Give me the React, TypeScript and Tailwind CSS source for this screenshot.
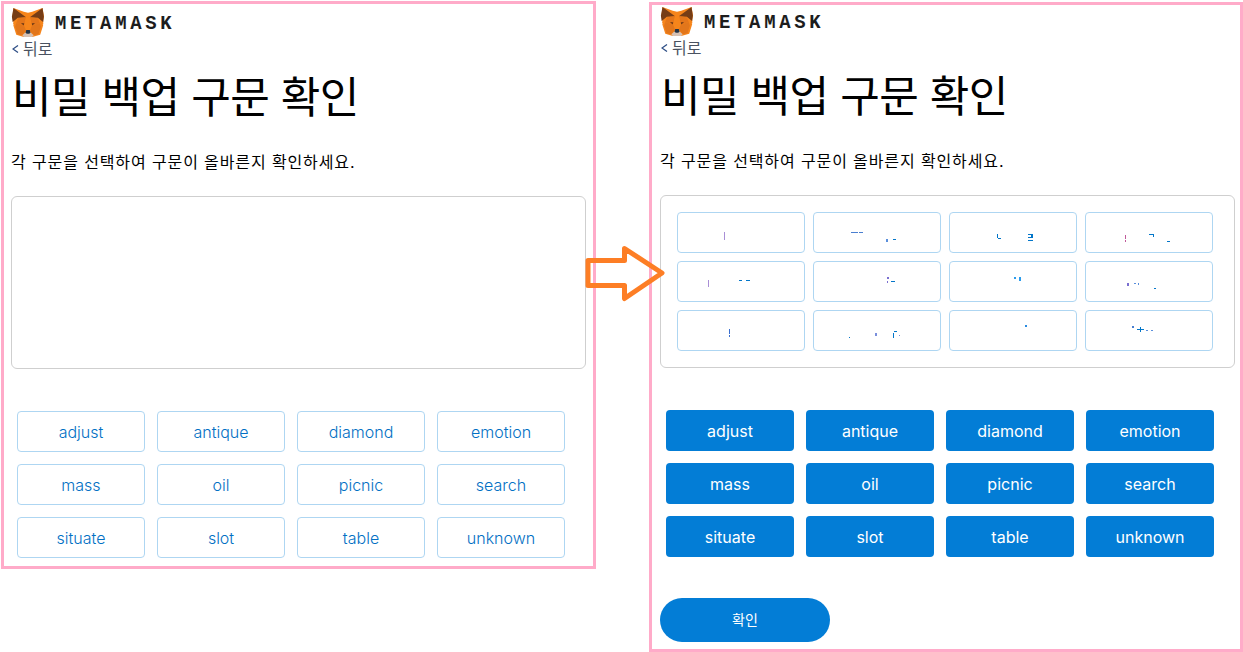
import type { ReactNode } from "react";

const WORDS = [
  "adjust",
  "antique",
  "diamond",
  "emotion",
  "mass",
  "oil",
  "picnic",
  "search",
  "situate",
  "slot",
  "table",
  "unknown",
];

// leftover glyph fragments in the right hand cards: x, y, w, h, colour
type Speck = [number, number, number, number, string];

const SPECKS: Speck[][] = [
  [[46, 19, 1, 8, "#a98fd6"]],
  [
    [37, 19, 7, 1, "#4a7fd0"],
    [45, 19, 4, 1, "#4a7fd0"],
    [72, 26, 2, 3, "#5a8fdc"],
    [79, 26, 3, 1, "#0376c9"],
  ],
  [
    [47, 21, 1, 4, "#0376c9"],
    [48, 25, 3, 1, "#0376c9"],
    [78, 21, 5, 1, "#0376c9"],
    [81, 22, 2, 3, "#0376c9"],
    [78, 24, 4, 1, "#0376c9"],
    [78, 27, 5, 1, "#0376c9"],
  ],
  [
    [39, 22, 1, 4, "#c05a9a"],
    [39, 27, 1, 2, "#c05a9a"],
    [63, 21, 5, 1, "#0376c9"],
    [67, 22, 1, 2, "#0376c9"],
    [81, 28, 3, 1, "#0376c9"],
  ],
  [
    [30, 18, 1, 7, "#a98fd6"],
    [61, 18, 3, 1, "#0376c9"],
    [68, 18, 4, 1, "#0376c9"],
  ],
  [
    [73, 15, 2, 2, "#7a6fd0"],
    [73, 19, 1, 2, "#7a6fd0"],
    [77, 19, 4, 1, "#0376c9"],
  ],
  [
    [64, 15, 2, 2, "#2a9bec"],
    [69, 15, 2, 4, "#2a9bec"],
  ],
  [
    [41, 21, 2, 3, "#7a6fd0"],
    [48, 21, 2, 1, "#5a8fdc"],
    [52, 21, 1, 2, "#5a8fdc"],
    [68, 26, 2, 1, "#0376c9"],
  ],
  [
    [51, 18, 1, 5, "#3a6fd0"],
    [51, 24, 1, 2, "#3a6fd0"],
  ],
  [
    [35, 26, 1, 1, "#0376c9"],
    [61, 22, 2, 3, "#7a8fdc"],
    [79, 22, 1, 5, "#0376c9"],
    [80, 20, 3, 1, "#0376c9"],
    [85, 24, 1, 1, "#7a8fdc"],
  ],
  [[75, 14, 2, 2, "#2a8be0"]],
  [
    [46, 15, 2, 2, "#4a7fd0"],
    [51, 18, 7, 1, "#0376c9"],
    [54, 16, 1, 5, "#0376c9"],
    [60, 19, 2, 1, "#5a8fdc"],
    [65, 19, 2, 1, "#5a8fdc"],
  ],
];

function Logo() {
  return (
    <div className="flex h-[32px] items-center">
      <svg viewBox="0 0 35 32" className="h-[30px] w-[34px] shrink-0">
        <path d="M33 1l1.600 9-1 5.500.7.600-1 .8.8.7-1 .8.7.6-.6 2-2.700 8.600L22 32h-9l-8-2.400-2.700-8.600-.6-2 .7-.6-1-.8.8-.7-1-.8.7-.6-1-5.500L2 1l11 4 4.500 1L22 5z" fill="#f6851b" />
        <path d="M33 1l1.400 9.500-.8 5.500-5.600-4.500L19.500 11z M2 1l13.400 10-8.700.5-5.600 4.500-.8-5.500z" fill="#763d16" />
        <path d="M7 12l8.400-1-2 9-8.400-3z M28 12l-8.400-1 2 9 8.400-3z" fill="#e4761b" />
        <path d="M10 17l3.600.3-.6 2.700z M25 17l-3.600.3.6 2.700z" fill="#763d16" />
        <path d="M15.400 11h4.200l2 9-2 5h-4.200l-2-5z" fill="#f6851b" />
        <path d="M5 17l8.400 3 2 5-4 5-5-1-2.700-8z M30 17l-8.400 3-2 5 4 5 5-1 2.700-8z" fill="#e2761b" />
        <path d="M11.500 30l3.500-3.200h5l3.500 3.200L22 32h-9z" fill="#d7c1b3" />
        <path d="M15 26.800l.6-2.400h3.800l.6 2.400-1 1.800h-3z" fill="#233447" />
      </svg>
      <span className="ml-[10px] origin-left scale-x-[0.9] pt-[3px] font-['Liberation_Mono',monospace] text-[21px] font-bold leading-none tracking-[4.1px] text-[#1d1d1d]">
        METAMASK
      </span>
    </div>
  );
}

function Header() {
  return (
    <>
      <div className="pl-[7px]">
        <Logo />
      </div>
      <div className="mt-[2px] flex items-center pl-[8px] text-[16px] leading-[18px] text-[#4a5260]">
        <svg viewBox="0 0 7 8" className="mr-[4px] h-[8px] w-[7px]">
          <path d="M6 .5 1 4l5 3.500" fill="none" stroke="#2f4f86" strokeWidth="1.300" />
        </svg>
        뒤로
      </div>
      <h1 className="mt-[11px] pl-[8px] text-[43px] font-normal leading-[56px] tracking-[-0.55px] text-black">
        비밀 백업 구문 확인
      </h1>
      <p className="mt-[26px] pl-[7px] text-[16px] leading-[22px] tracking-[0.88px] text-black">
        각 구문을 선택하여 구문이 올바른지 확인하세요.
      </p>
    </>
  );
}

function WordButton({ children, filled }: { children: ReactNode; filled?: boolean }) {
  return (
    <div
      className={
        filled
          ? "flex h-[41px] w-[128px] items-center justify-center rounded-[4px] bg-[#037dd6] pt-[1px] text-[16px] text-white"
          : "flex h-[41px] w-[128px] items-center justify-center rounded-[4px] border border-[#aed6f2] bg-white pt-[1px] text-[16px] font-light text-[#0270c4]"
      }
    >
      {children}
    </div>
  );
}

export default function App() {
  return (
    <div className="relative flex h-[652px] w-[1243px] items-start overflow-hidden bg-white font-['Inter','Noto_Sans_CJK_KR',sans-serif]">
      {/* before */}
      <section className="ml-[1px] mt-[1px] h-[568px] w-[595px] shrink-0 border-[3px] border-[#ffabc9] pt-[2px]">
        <Header />
        <div className="ml-[7px] mt-[23px] h-[173px] w-[575px] rounded-[6px] border border-[#cfcfcf]" />
        <div className="ml-[13px] mt-[42px] grid grid-cols-[repeat(4,128px)] gap-x-[12px] gap-y-[12px]">
          {WORDS.map((w) => (
            <WordButton key={w}>{w}</WordButton>
          ))}
        </div>
      </section>

      {/* after */}
      <section className="ml-[53px] mt-[2px] h-[650px] w-[594px] shrink-0 border-[3px] border-[#ffabc9] pl-[1px]">
        <Header />
        <div className="ml-[7px] mt-[23px] grid h-[173px] w-[575px] grid-cols-[repeat(4,128px)] content-start gap-x-[8px] gap-y-[8px] rounded-[6px] border border-[#cfcfcf] pl-[16px] pt-[16px]">
          {SPECKS.map((specks, i) => (
            <div key={i} className="relative h-[41px] w-[128px] rounded-[4px] border border-[#aed6f2]">
              {specks.map(([x, y, w, h, c], j) => (
                <span key={j} className="absolute" style={{ left: x, top: y, width: w, height: h, background: c }} />
              ))}
            </div>
          ))}
        </div>
        <div className="ml-[13px] mt-[42px] grid grid-cols-[repeat(4,128px)] gap-x-[12px] gap-y-[12px]">
          {WORDS.map((w) => (
            <WordButton key={w} filled>
              {w}
            </WordButton>
          ))}
        </div>
        <div className="ml-[7px] mt-[41px] flex h-[44px] w-[170px] items-center justify-center rounded-full bg-[#037dd6] pb-[1px] text-[14px] text-white">
          확인
        </div>
      </section>

      {/* arrow between the two panels */}
      <svg viewBox="0 0 84 58" className="absolute left-[584px] top-[245px] h-[58px] w-[84px]">
        <path d="M4 15.500h36.500V3.500L78 28 40.500 53.500V40.500H4z" fill="none" stroke="#fd7e25" strokeWidth="5" strokeLinejoin="round" />
      </svg>
    </div>
  );
}
